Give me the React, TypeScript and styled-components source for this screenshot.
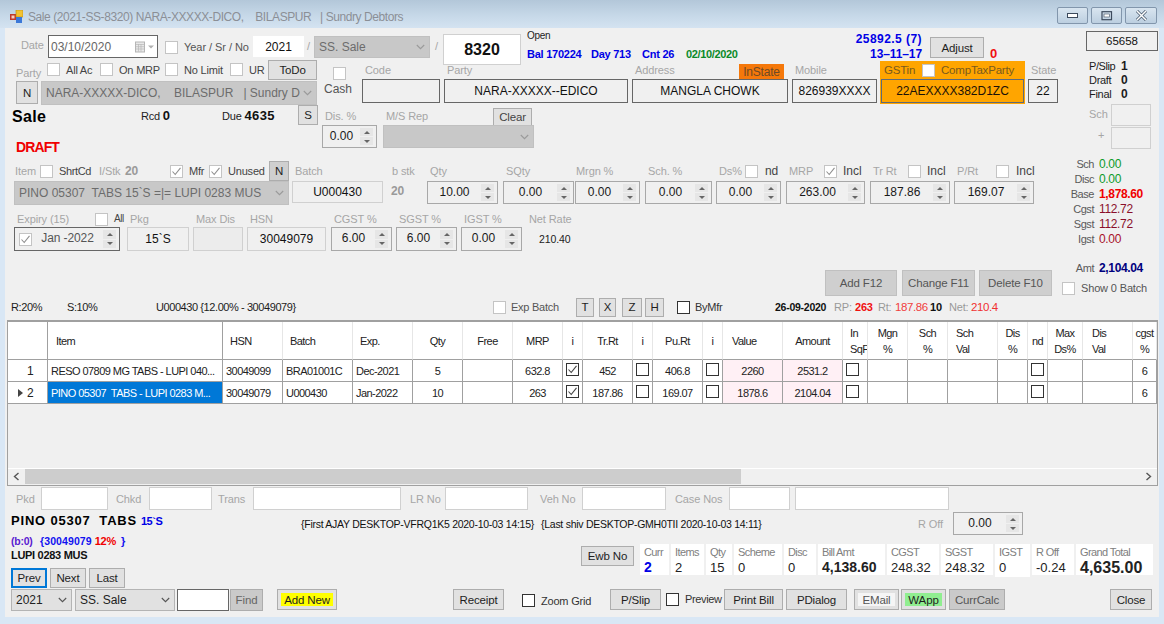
import React from 'react';
import styled, { createGlobalStyle, css } from 'styled-components';

const Global = createGlobalStyle`
  html, body { margin: 0; padding: 0; background: #d9e7f5; }
  body { font-family: "Liberation Sans", Arial, sans-serif; font-size: 11px; color: #222; }
  * { box-sizing: border-box; }
`;

type P = { $w?: number; $h?: number; $ml?: number; $mt?: number };
const place = css<P>`
  flex: none;
  ${(p) => p.$w !== undefined && `width:${p.$w}px;`}
  ${(p) => p.$h !== undefined && `height:${p.$h}px;`}
  ${(p) => p.$ml !== undefined && `margin-left:${p.$ml}px;`}
  ${(p) => p.$mt !== undefined && `margin-top:${p.$mt}px;`}
`;

const Window = styled.div`
  width: 1164px; height: 624px; overflow: hidden; display: flex; flex-direction: column;
  background: #d9e7f5;
`;
const TitleBar = styled.div`
  height: 28px; flex: none; display: flex; align-items: center; padding: 5px 7px 0 10px;
  background: linear-gradient(180deg, #b3c7d9 0%, #c6d8e8 55%, #d4e3f1 100%);
`;
const TitleText = styled.span`
  margin-left: 5px; font-size: 12px; color: #8b8f96; white-space: pre; letter-spacing: -0.42px; flex: 1;
`;
const WinBtn = styled.div<{ $ml?: number; $w: number }>`
  width: ${(p) => p.$w}px; height: 17px; margin-left: ${(p) => p.$ml ?? 3}px; margin-top: 2px; align-self: flex-start;
  border: 1px solid #8296ac; border-radius: 2px;
  background: linear-gradient(180deg, #d9e5f0 0%, #bccfe0 100%);
  display: flex; align-items: center; justify-content: center;
`;
const Body = styled.div`
  width: 1154px; height: 589px; margin-left: 5px; background: #f0f0f0; flex: none;
  display: flex; flex-direction: column;
`;
const Upper = styled.div`
  height: 290px; flex: none; display: flex;
`;
const MainCol = styled.div`
  width: 1055px; flex: none; display: flex; flex-direction: column;
`;
const SideCol = styled.div`
  width: 99px; flex: none; display: flex; flex-direction: column;
`;
const Row = styled.div<P & { $center?: boolean }>`
  ${place}
  display: flex;
  align-items: ${(p) => (p.$center ? 'center' : 'flex-start')};
`;
const Stack = styled.div<P>`
  ${place}
  display: flex; flex-direction: column;
`;
const Lbl = styled.span<P>`
  ${place}
  font-size: 11px; color: #a6a6a6; white-space: pre; letter-spacing: -0.1px; line-height: 14px;
`;
const Txt = styled.span<P & { $size?: number; $bold?: boolean; $color?: string; $ls?: number; $right?: boolean }>`
  ${place}
  font-size: ${(p) => p.$size ?? 11}px;
  font-weight: ${(p) => (p.$bold ? 700 : 400)};
  color: ${(p) => p.$color ?? '#1c1c1c'};
  letter-spacing: ${(p) => p.$ls ?? -0.2}px;
  text-align: ${(p) => (p.$right ? 'right' : 'left')};
  white-space: pre; line-height: 14px;
`;
const CheckBox = styled.span<P & { $dark?: boolean; $fill?: string }>`
  ${place}
  width: 13px; height: 13px; display: inline-flex; align-items: center; justify-content: center;
  background: ${(p) => p.$fill ?? '#fff'};
  border: 1px solid ${(p) => (p.$dark ? '#333' : '#c4c4c4')};
`;
const Tick = () => (
  <svg width="11" height="11" viewBox="0 0 11 11"><path d="M1.5 5.5 4.2 8.5 9.5 1.8" fill="none" stroke="#8f8f8f" strokeWidth="1.1" /></svg>
);
const Check: React.FC<P & { on?: boolean; dark?: boolean; fill?: string }> = ({ on, dark, fill, ...r }) => (
  <CheckBox {...r} $dark={dark} $fill={fill}>{on && <Tick />}</CheckBox>
);
const Btn = styled.div<P & { $bg?: string; $color?: string; $focus?: boolean; $border?: string }>`
  ${place}
  display: flex; align-items: center; justify-content: center;
  background: ${(p) => p.$bg ?? '#e1e1e1'};
  border: ${(p) => (p.$focus ? '2px solid #0078d7' : `1px solid ${p.$border ?? '#adadad'}`)};
  font-size: 11.5px; color: ${(p) => p.$color ?? '#1e1e1e'}; white-space: pre; letter-spacing: -0.15px;
`;
const Inner = styled.span<{ $bg: string }>`
  display: flex; align-items: center; justify-content: center; width: 100%; height: 100%;
  background: ${(p) => p.$bg};
`;
const BtnFrame = styled(Btn)`padding: 3px;`;
const Box = styled.div<P & { $dark?: boolean; $white?: boolean; $size?: number; $bold?: boolean; $bg?: string; $noBorder?: boolean }>`
  ${place}
  display: flex; align-items: center; justify-content: center;
  background: ${(p) => p.$bg ?? (p.$white ? '#fff' : '#f0f0f0')};
  border: 1px solid ${(p) => (p.$dark ? '#666' : '#d0d0d0')};
  ${(p) => p.$noBorder && 'border-color: #fff;'}
  font-size: ${(p) => p.$size ?? 12}px; font-weight: ${(p) => (p.$bold ? 700 : 400)};
  color: #111; white-space: pre; overflow: hidden;
`;
const ComboBox = styled.div<P & { $light?: boolean }>`
  ${place}
  display: flex; align-items: center; padding: 0 4px 0 4px;
  background: ${(p) => (p.$light ? '#e1e1e1' : '#c8c8c8')};
  border: 1px solid ${(p) => (p.$light ? '#b4b4b4' : '#c0c0c0')};
  font-size: 12px; color: ${(p) => (p.$light ? '#222' : '#6c6c6c')}; white-space: pre; overflow: hidden;
`;
const ComboText = styled.span`flex: 1; overflow: hidden; white-space: pre;`;
const Chevron: React.FC<{ dark?: boolean }> = ({ dark }) => (
  <svg width="9" height="6" viewBox="0 0 9 6"><path d="M.8 1 4.5 4.7 8.2 1" fill="none" stroke={dark ? '#555' : '#9a9a9a'} strokeWidth="1.1" /></svg>
);
const Combo: React.FC<P & { light?: boolean; children?: React.ReactNode }> = ({ light, children, ...r }) => (
  <ComboBox {...r} $light={light}><ComboText>{children}</ComboText><Chevron dark={light} /></ComboBox>
);
const SpinBox = styled.div<P & { $dark?: boolean }>`
  ${place}
  display: flex; align-items: center; padding: 2px 3px 2px 0;
  border: 1px solid ${(p) => (p.$dark ? '#666' : '#a8a8a8')};
  font-size: 12px; color: #1a1a1a; background: #f0f0f0;
`;
const SpinVal = styled.span`flex: 1; text-align: center; padding-bottom: 2px; white-space: pre;`;
const SpinCol = styled.div`
  width: 13px; height: 100%; display: flex; flex-direction: column; gap: 1px; flex: none;
`;
const SpinPart = styled.div<{ $down?: boolean }>`
  flex: 1; background: #e6e6e6; display: flex; align-items: center; justify-content: center;
  &::after {
    content: ''; border-left: 3px solid transparent; border-right: 3px solid transparent;
    ${(p) => (p.$down ? 'border-top: 3px solid #666;' : 'border-bottom: 3px solid #666;')}
  }
`;
const Spin: React.FC<P & { v: string; dark?: boolean }> = ({ v, dark, ...r }) => (
  <SpinBox {...r} $dark={dark}><SpinVal>{v}</SpinVal><SpinCol><SpinPart /><SpinPart $down /></SpinCol></SpinBox>
);
const Field = styled.div<P>`
  ${place}
  display: flex; flex-direction: column; position: relative;
`;
const Head = styled.div<{ $h: number; $pl?: number }>`
  height: ${(p) => p.$h}px; flex: none; display: flex; align-items: center;
  padding-left: ${(p) => p.$pl ?? 3}px;
`;
const InState = styled.span`
  position: absolute; right: 4px; top: 3px; width: 45px; height: 15px;
  background: #f5780a; color: #6f4a25; font-size: 12px; letter-spacing: -0.2px;
  display: flex; align-items: center; justify-content: center;
`;
const GstPanel = styled.div<P>`
  ${place}
  background: #ffa500; display: flex; flex-direction: column; padding: 0 1px;
`;
const GstHead = styled.div`
  height: 18px; display: flex; align-items: center; padding-left: 3px; color: #7a5a1e; font-size: 11.5px; letter-spacing: -0.2px;
`;
const GstInput = styled.div`
  height: 24px; background: #ffa500; border: 1px solid #5f6a78; display: flex; align-items: center; justify-content: center;
  font-size: 12px; color: #1a1208;
`;
const SumGrid = styled.div<{ $mt: number }>`
  display: grid; grid-template-columns: 34px auto; column-gap: 5px; margin-top: ${(p) => p.$mt}px; justify-content: start;
`;
const SumL = styled.span`
  font-size: 11px; color: #5a5a5a; letter-spacing: -0.45px; text-align: right; line-height: 15px; white-space: pre;
`;
const SumV = styled.span<{ $c: string; $bold?: boolean }>`
  font-size: 12px; color: ${(p) => p.$c}; font-weight: ${(p) => (p.$bold ? 700 : 400)};
  letter-spacing: -0.35px; line-height: 15px; white-space: pre;
`;

const GridWrap = styled.div`
  height: 166px; flex: none; margin: 2px 0 0 2px; width: 1151px; display: flex; flex-direction: column;
  border: 1px solid #a0a0a0; border-top-width: 2px; background: #f0f0f0; overflow: hidden;
`;
const GridArea = styled.div`
  height: 147px; flex: none; overflow: hidden; border-bottom: 1px solid #fff;
`;
const Tbl = styled.table`
  border-collapse: separate; border-spacing: 0; table-layout: fixed; width: 1149px;
  font-size: 11px; letter-spacing: -0.55px; color: #222;
`;
const Col = styled.col<{ $w: number }>`width: ${(p) => p.$w}px;`;
const Th = styled.th<{ $left?: boolean; $pl?: number }>`
  height: 38px; padding: 0 0 0 ${(p) => p.$pl ?? 0}px; font-weight: 400; background: #fff;
  text-align: ${(p) => (p.$left ? 'left' : 'center')}; line-height: 16px; font-size: 11px;
  border-right: 1px solid #e6e6e6; border-bottom: 1px solid #a0a0a0; white-space: pre;
  overflow: hidden;
  &:first-child { border-right-color: #a0a0a0; }
  &:nth-child(2) { border-right-color: #a0a0a0; }
`;
const Td = styled.td<{ $left?: boolean; $pink?: boolean; $sel?: boolean }>`
  height: 22px; padding: ${(p) => (p.$left ? '0 0 0 3px' : '0')}; 
  background: ${(p) => (p.$sel ? '#0078d7' : p.$pink ? '#fff0f5' : '#fff')};
  color: ${(p) => (p.$sel ? '#fff' : '#222')};
  text-align: ${(p) => (p.$left ? 'left' : 'center')};
  border-right: 1px solid #a0a0a0; border-bottom: 1px solid #a0a0a0; white-space: pre; overflow: hidden;
`;
const Hdr = styled(Td)`
  position: relative; font-size: 12px;
`;
const RowNum = styled.span`
  display: flex; align-items: center; justify-content: flex-end; gap: 4px; padding-right: 14px;
`;
const Marker = styled.span`
  border-left: 5px solid #444; border-top: 4px solid transparent; border-bottom: 4px solid transparent;
`;
const CellCheck = styled.span`
  display: inline-flex; width: 13px; height: 13px; border: 1px solid #333; background: #fff;
  align-items: center; justify-content: center; vertical-align: middle;
`;
const CheckCell = styled(Td)`padding: 0 0 2px 3px; text-align: left;`;
const ScrollBar = styled.div`
  height: 15px; flex: none; display: flex; align-items: center; background: #f0f0f0;
`;
const ScrollArrow = styled.span<{ $right?: boolean }>`
  width: 17px; height: 100%; display: flex; align-items: center; justify-content: center; flex: none;
  ${(p) => p.$right && 'margin-left: auto;'}
`;
const Thumb = styled.div`width: 716px; height: 15px; background: #cdcdcd;`;

const Tile = styled.div<P & { $tall?: boolean }>`
  ${place}
  background: #fff; height: ${(p) => (p.$tall ? 33 : 31)}px; display: flex; flex-direction: column; padding: 1px 0 0 4px;
`;
const TileL = styled.span`
  font-size: 11px; color: #808080; letter-spacing: -0.6px; line-height: 14px; white-space: pre;
`;
const TileV = styled.span<{ $size?: number; $bold?: boolean; $color?: string; $ls?: number }>`
  font-size: ${(p) => p.$size ?? 13}px; font-weight: ${(p) => (p.$bold ? 700 : 400)};
  color: ${(p) => p.$color ?? '#222'}; line-height: 15px; white-space: pre; margin-top: 1px;
  letter-spacing: ${(p) => p.$ls ?? 0}px;
`;

const cols = [40, 175, 60, 70, 60, 50, 50, 50, 20, 50, 20, 50, 20, 60, 60, 25, 40, 40, 50, 30, 20, 35, 50, 24];
const headers: { t: string; left?: boolean; pl?: number }[] = [
  { t: '' }, { t: 'Item', left: true, pl: 8 }, { t: 'HSN', left: true, pl: 7 }, { t: 'Batch', left: true, pl: 7 }, { t: 'Exp.', left: true, pl: 7 },
  { t: 'Qty' }, { t: 'Free' }, { t: 'MRP' }, { t: 'i' }, { t: 'Tr.Rt' }, { t: 'i' }, { t: 'Pu.Rt' }, { t: 'i' },
  { t: 'Value', left: true, pl: 9 }, { t: 'Amount' }, { t: 'In\nSqF', left: true, pl: 7 }, { t: 'Mgn\n%' }, { t: 'Sch\n%' }, { t: 'Sch\nVal', left: true, pl: 8 },
  { t: 'Dis\n%' }, { t: 'nd' }, { t: 'Max\nDs%' }, { t: 'Dis\nVal', left: true, pl: 9 }, { t: 'cgst\n%' },
];
const TableTick = () => (
  <svg width="11" height="11" viewBox="0 0 11 11"><path d="M1.5 5.5 4.2 8.5 9.5 1.8" fill="none" stroke="#444" strokeWidth="1.1" /></svg>
);
const rows = [
  { n: '1', item: 'RESO 07809 MG TABS - LUPI 040...', hsn: '30049099', batch: 'BRA01001C', exp: 'Dec-2021', qty: '5', mrp: '632.8', tr: '452', pu: '406.8', val: '2260', amt: '2531.2' },
  { n: '2', item: 'PINO 05307  TABS - LUPI 0283 M...', hsn: '30049079', batch: 'U000430', exp: 'Jan-2022', qty: '10', mrp: '263', tr: '187.86', pu: '169.07', val: '1878.6', amt: '2104.04', sel: true },
];

const IconApp = () => (
  <svg width="13" height="13" viewBox="0 0 13 13">
    <rect x="0" y="4" width="6" height="6" fill="#c0392b" />
    <rect x="6" y="0" width="7" height="7" fill="#f2c230" stroke="#b8860b" strokeWidth=".6" />
    <rect x="6" y="7" width="6" height="6" fill="#3b78d8" />
    <rect x="1.5" y="5.5" width="3" height="3" fill="#f5d0c0" />
  </svg>
);
const Calendar = () => (
  <svg width="20" height="12" viewBox="0 0 20 12">
    <rect x=".5" y="1" width="9" height="10" fill="#e8e8e8" stroke="#b5b5b5" />
    <path d="M1 3.5h8M1 5.7h8M1 8h8M3.5 3v7.5M6 3v7.5" stroke="#b8b8b8" strokeWidth=".7" />
    <path d="M13 4.5h6l-3 3z" fill="#b0b0b0" />
  </svg>
);

export default function App() {
  return (
    <Window>
      <Global />
      <TitleBar>
        <IconApp />
        <TitleText>{'Sale (2021-SS-8320) NARA-XXXXX-DICO,    BILASPUR   | Sundry Debtors'}</TitleText>
        <WinBtn $w={31}>
          <svg width="12" height="6" viewBox="0 0 12 6"><rect x=".5" y=".5" width="10" height="4" fill="#fff" stroke="#3c4a5c" /></svg>
        </WinBtn>
        <WinBtn $w={31}>
          <svg width="12" height="10" viewBox="0 0 12 10"><rect x="1" y=".7" width="9.5" height="8" fill="none" stroke="#3c4a5c" strokeWidth="1.2" /><rect x="3" y="3" width="5.5" height="3" fill="#fff" stroke="#3c4a5c" strokeWidth=".6" /></svg>
        </WinBtn>
        <WinBtn $w={32}>
          <svg width="13" height="11" viewBox="0 0 13 11"><path d="M2 1 11 10M11 1 2 10" stroke="#45566a" strokeWidth="3" /><path d="M2 1 11 10M11 1 2 10" stroke="#fff" strokeWidth="1.5" /></svg>
        </WinBtn>
      </TitleBar>
      <Body>
        <Upper>
          <MainCol>
            <Row $h={32}>
              <Lbl $ml={16} $w={27} $mt={10}>Date</Lbl>
              <Box $w={110} $h={23} $mt={7} $dark $white $size={12}>
                <Txt $w={84} $size={12} $color="#666" $ls={0}>03/10/2020</Txt>
                <Calendar />
              </Box>
              <Check $ml={7} $mt={13} />
              <Txt $ml={6} $w={69} $mt={12} $color="#555" $ls={-0.05}>Year / Sr / No</Txt>
              <Box $w={51} $h={21} $mt={8} $white $noBorder>2021</Box>
              <Lbl $w={10} $ml={0} $mt={11}>{' /'}</Lbl>
              <Combo $w={116} $h={22} $mt={8}>SS. Sale</Combo>
              <Lbl $w={8} $ml={5} $mt={11}>/</Lbl>
              <Box $w={78} $h={31} $mt={6} $white $size={16} $bold>8320</Box>
              <Stack $w={322} $ml={6} $mt={1}>
                <Txt $size={10} $ls={-0.3}>Open</Txt>
                <Row $mt={4}>
                  <Txt $w={64} $bold $color="#0000e6" $ls={-0.25}>Bal 170224</Txt>
                  <Txt $w={51} $bold $color="#0000e6" $ls={-0.25}>Day 713</Txt>
                  <Txt $w={44} $bold $color="#0000e6" $ls={-0.25}>Cnt 26</Txt>
                  <Txt $bold $color="#0a8a28" $ls={-0.35}>02/10/2020</Txt>
                </Row>
              </Stack>
              <Stack $w={73} $mt={4}>
                <Txt $right $bold $size={12} $color="#0000e6" $ls={0.45}>25892.5 (7)</Txt>
                <Txt $right $bold $size={12} $color="#0000e6" $ls={-0.1} $mt={1}>13–11–17</Txt>
              </Stack>
              <Btn $ml={8} $w={54} $h={21} $mt={9}>Adjust</Btn>
              <Txt $ml={6} $mt={19} $size={13} $bold $color="#f01010">0</Txt>
            </Row>
            <Row $h={100}>
              <Stack $w={315}>
                <Row $h={21}>
                  <Lbl $ml={11} $w={31} $mt={6}>Party</Lbl>
                  <Check $mt={3} />
                  <Txt $ml={6} $w={34} $mt={3} $color="#444">All Ac</Txt>
                  <Check $mt={3} />
                  <Txt $ml={6} $w={46} $mt={3} $color="#444">On MRP</Txt>
                  <Check $mt={3} />
                  <Txt $ml={6} $w={46} $mt={3} $color="#444">No Limit</Txt>
                  <Check $mt={3} />
                  <Txt $ml={6} $w={19} $mt={3} $color="#444">UR</Txt>
                  <Btn $w={49} $h={20}>ToDo</Btn>
                </Row>
                <Row $h={24}>
                  <Btn $ml={11} $w={22} $h={23}>N</Btn>
                  <Combo $ml={3} $w={276} $h={24}>{'NARA-XXXXX-DICO,    BILASPUR   | Sundry D'}</Combo>
                </Row>
                <Row $h={20}>
                  <Txt $ml={7} $w={129} $mt={5} $size={16} $bold $color="#000" $ls={0.3}>Sale</Txt>
                  <Txt $w={81} $mt={4} $size={11}>Rcd <Txt $bold $size={13} $color="#111">0</Txt></Txt>
                  <Txt $w={76} $mt={4} $size={11}>Due <Txt $bold $size={13} $color="#111" $ls={0.4}>4635</Txt></Txt>
                  <Btn $w={20} $h={20}>S</Btn>
                </Row>
                <Txt $ml={11} $mt={15} $size={14} $bold $color="#f00000" $ls={-0.9}>DRAFT</Txt>
              </Stack>
              <Stack>
                <Row $h={45} $mt={1}>
                  <Stack $ml={4} $w={38}>
                    <Check $ml={9} $mt={6} />
                    <Txt $mt={2} $size={12} $ls={0} $color="#555">Cash</Txt>
                  </Stack>
                  <Field $w={78}><Head $h={18}><Lbl>Code</Lbl></Head><Box $h={24} $dark /></Field>
                  <Field $w={184} $ml={4}><Head $h={18}><Lbl>Party</Lbl></Head><Box $h={24} $dark>NARA-XXXXX--EDICO</Box></Field>
                  <Field $w={156} $ml={4}>
                    <Head $h={18}><Lbl>Address</Lbl></Head>
                    <InState>InState</InState>
                    <Box $h={24} $dark>MANGLA CHOWK</Box>
                  </Field>
                  <Field $w={85} $ml={4}><Head $h={18}><Lbl>Mobile</Lbl></Head><Box $h={24} $dark>826939XXXX</Box></Field>
                  <GstPanel $w={145} $h={43} $ml={3}>
                    <GstHead>
                      <Txt $w={38} $size={11.5} $color="#7a5a1e">GSTin</Txt>
                      <Check />
                      <Txt $ml={6} $size={11.5} $color="#7a5a1e">CompTaxParty</Txt>
                    </GstHead>
                    <GstInput>22AEXXXX382D1ZC</GstInput>
                  </GstPanel>
                  <Field $w={30} $ml={3}><Head $h={18}><Lbl>State</Lbl></Head><Box $h={24} $dark>22</Box></Field>
                </Row>
                <Row>
                  <Field $w={55} $ml={2}>
                    <Head $h={19}><Lbl>Dis. %</Lbl></Head>
                    <Spin $h={23} v="0.00" />
                  </Field>
                  <Field $w={151} $ml={6}>
                    <Head $h={19}>
                      <Lbl>M/S Rep</Lbl>
                      <Btn $ml={65} $w={39} $h={18} $mt={2} $color="#444">Clear</Btn>
                    </Head>
                    <Combo $h={23} />
                  </Field>
                </Row>
              </Stack>
            </Row>
            <Row $mt={1} $h={44}>
              <Field $w={275} $ml={9}>
                <Head $h={20} $pl={1}>
                  <Lbl $w={25}>Item</Lbl>
                  <Check />
                  <Txt $ml={6} $w={40} $ls={-0.35} $color="#444">ShrtCd</Txt>
                  <Lbl $w={26}>I/Stk</Lbl>
                  <Txt $w={45} $size={12} $bold $color="#9a9a9a">20</Txt>
                  <Check on />
                  <Txt $ml={6} $w={20} $color="#444">Mfr</Txt>
                  <Check on />
                  <Txt $ml={6} $w={41} $color="#444">Unused</Txt>
                  <Btn $w={20} $h={20} $bg="#cfcfcf">N</Btn>
                </Head>
                <Combo $h={24}>{'PINO 05307  TABS 15`S =|= LUPI 0283 MUS'}</Combo>
              </Field>
              <Field $w={91} $ml={3}><Head $h={20}><Lbl>Batch</Lbl></Head><Box $h={22}>U000430</Box></Field>
              <Stack $w={38} $ml={6}>
                <Head $h={20}><Lbl>b stk</Lbl></Head>
                <Txt $ml={2} $mt={3} $size={12} $bold $color="#9a9a9a">20</Txt>
              </Stack>
              <Field $w={71}><Head $h={20}><Lbl>Qty</Lbl></Head><Spin $h={23} v="10.00" /></Field>
              <Field $w={71} $ml={5}><Head $h={20}><Lbl>SQty</Lbl></Head><Spin $h={23} v="0.00" /></Field>
              <Field $w={65} $ml={1}><Head $h={20} $pl={1}><Lbl>Mrgn %</Lbl></Head><Spin $h={23} v="0.00" /></Field>
              <Field $w={67} $ml={5}><Head $h={20}><Lbl>Sch. %</Lbl></Head><Spin $h={23} v="0.00" /></Field>
              <Field $w={65} $ml={4}>
                <Head $h={20}><Lbl $w={26}>Ds%</Lbl><Check /><Txt $ml={7} $size={12} $color="#444">nd</Txt></Head>
                <Spin $h={23} v="0.00" />
              </Field>
              <Field $w={79} $ml={5}>
                <Head $h={20}><Lbl $w={35}>MRP</Lbl><Check on /><Txt $ml={6} $size={12} $color="#444" $ls={0}>Incl</Txt></Head>
                <Spin $h={23} v="263.00" />
              </Field>
              <Field $w={80} $ml={5}>
                <Head $h={20}><Lbl $w={35}>Tr Rt</Lbl><Check /><Txt $ml={6} $size={12} $color="#444" $ls={0}>Incl</Txt></Head>
                <Spin $h={23} v="187.86" />
              </Field>
              <Field $w={80} $ml={4}>
                <Head $h={20}><Lbl $w={39}>P/Rt</Lbl><Check /><Txt $ml={7} $size={12} $color="#444" $ls={0}>Incl</Txt></Head>
                <Spin $h={23} v="169.07" />
              </Field>
            </Row>
            <Row $mt={6} $h={40}>
              <Field $w={106} $ml={9}>
                <Head $h={16}>
                  <Lbl $w={78}>Expiry (15)</Lbl>
                  <Check />
                  <Txt $ml={6} $size={10} $ls={-0.5} $color="#444">All</Txt>
                </Head>
                <SpinBox $h={24} $dark>
                  <Check on $ml={4} />
                  <SpinVal><Txt $size={12} $ls={-0.1} $color="#555">Jan -2022</Txt></SpinVal>
                  <SpinCol><SpinPart /><SpinPart $down /></SpinCol>
                </SpinBox>
              </Field>
              <Field $w={62} $ml={7}><Head $h={16}><Lbl>Pkg</Lbl></Head><Box $h={24}>15`S</Box></Field>
              <Field $w={50} $ml={4}><Head $h={16}><Lbl>Max Dis</Lbl></Head><Box $h={24} $bg="#ececec" /></Field>
              <Field $w={79} $ml={4}><Head $h={16}><Lbl>HSN</Lbl></Head><Box $h={24}>30049079</Box></Field>
              <Field $w={61} $ml={5}><Head $h={16}><Lbl>CGST %</Lbl></Head><Spin $h={24} v="6.00" /></Field>
              <Field $w={61} $ml={4}><Head $h={16}><Lbl>SGST %</Lbl></Head><Spin $h={24} v="6.00" /></Field>
              <Field $w={61} $ml={4}><Head $h={16}><Lbl>IGST %</Lbl></Head><Spin $h={24} v="0.00" /></Field>
              <Field $w={70} $ml={4}>
                <Head $h={16}><Lbl>Net Rate</Lbl></Head>
                <Txt $ml={13} $mt={5} $size={10.5} $ls={-0.1}>210.40</Txt>
              </Field>
            </Row>
            <Row $mt={19} $h={26}>
              <Btn $ml={820} $w={72} $h={26} $bg="#cfcfcf" $color="#555" $border="#c0c0c0">Add F12</Btn>
              <Btn $ml={5} $w={73} $h={26} $bg="#cfcfcf" $color="#555" $border="#c0c0c0">Change F11</Btn>
              <Btn $ml={4} $w={73} $h={26} $bg="#cfcfcf" $color="#555" $border="#c0c0c0">Delete F10</Btn>
            </Row>
            <Row $mt={1} $h={20} $center>
              <Txt $ml={6} $w={56} $ls={-0.4}>R:20%</Txt>
              <Txt $w={89} $ls={-0.4}>S:10%</Txt>
              <Txt $w={337} $ls={-0.42}>{'U000430 {12.00% - 30049079}'}</Txt>
              <Check />
              <Txt $ml={5} $w={65} $color="#555" $ls={-0.25}>Exp Batch</Txt>
              <Btn $w={18} $h={19}>T</Btn>
              <Btn $ml={5} $w={17} $h={19}>X</Btn>
              <Btn $ml={6} $w={20} $h={19}>Z</Btn>
              <Btn $ml={3} $w={19} $h={19}>H</Btn>
              <Check $ml={13} dark />
              <Txt $ml={5} $w={80} $color="#333" $ls={-0.25}>ByMfr</Txt>
              <Txt $w={59} $bold $size={10.5} $color="#111" $ls={-0.25}>26-09-2020</Txt>
              <Txt $w={21} $color="#999">RP:</Txt>
              <Txt $w={23} $bold $color="#f01010">263</Txt>
              <Txt $w={17} $color="#999">Rt:</Txt>
              <Txt $w={35} $color="#f04040" $size={11.5} $ls={-0.4}>187.86</Txt>
              <Txt $w={19} $bold $color="#111">10</Txt>
              <Txt $w={22} $color="#999">Net:</Txt>
              <Txt $color="#f03030" $size={11.5} $ls={-0.4}>210.4</Txt>
            </Row>
          </MainCol>
          <SideCol>
            <Box $ml={26} $mt={3} $w={72} $h={20} $dark $size={11.5}>65658</Box>
            <Row $ml={29} $mt={8} $h={14}><Txt $w={32} $ls={-0.4}>P/Slip</Txt><Txt $bold $size={12}>1</Txt></Row>
            <Row $ml={29} $h={14}><Txt $w={32} $ls={-0.3}>Draft</Txt><Txt $bold $size={12}>0</Txt></Row>
            <Row $ml={29} $h={14}><Txt $w={32} $ls={-0.3}>Final</Txt><Txt $bold $size={12}>0</Txt></Row>
            <Row $ml={29} $mt={3} $h={22}>
              <Lbl $w={22} $mt={3}>Sch</Lbl>
              <Box $w={40} $h={22} $bg="#f0f0f0" />
            </Row>
            <Row $ml={29} $mt={1} $h={22}>
              <Lbl $w={22} $ml={9} $mt={1}>+</Lbl>
              <Box $w={40} $h={22} $ml={-9} $bg="#f0f0f0" />
            </Row>
            <SumGrid $mt={8}>
              <SumL>Sch</SumL><SumV $c="#0d9b2a">0.00</SumV>
              <SumL>Disc</SumL><SumV $c="#0d9b2a">0.00</SumV>
              <SumL>Base</SumL><SumV $c="#f00000" $bold>1,878.60</SumV>
              <SumL>Cgst</SumL><SumV $c="#8a0f2a">112.72</SumV>
              <SumL>Sgst</SumL><SumV $c="#8a0f2a">112.72</SumV>
              <SumL>Igst</SumL><SumV $c="#a8102a">0.00</SumV>
            </SumGrid>
            <SumGrid $mt={14}>
              <SumL>Amt</SumL><SumV $c="#00007f" $bold>2,104.04</SumV>
            </SumGrid>
            <Row $ml={2} $mt={5} $center>
              <Check />
              <Txt $ml={6} $color="#555" $ls={-0.15}>Show 0 Batch</Txt>
            </Row>
          </SideCol>
        </Upper>
        <GridWrap>
          <GridArea>
            <Tbl>
              <colgroup>{cols.map((w, i) => <Col key={i} $w={w} />)}</colgroup>
              <thead>
                <tr>{headers.map((h, i) => <Th key={i} $left={h.left} $pl={h.pl}>{h.t}</Th>)}</tr>
              </thead>
              <tbody>
                {rows.map((r) => (
                  <tr key={r.n}>
                    <Hdr><RowNum>{r.sel && <Marker />}{r.n}</RowNum></Hdr>
                    <Td $left $sel={r.sel}>{r.item}</Td>
                    <Td $left>{r.hsn}</Td>
                    <Td $left>{r.batch}</Td>
                    <Td $left>{r.exp}</Td>
                    <Td>{r.qty}</Td>
                    <Td />
                    <Td>{r.mrp}</Td>
                    <CheckCell><CellCheck><TableTick /></CellCheck></CheckCell>
                    <Td>{r.tr}</Td>
                    <CheckCell><CellCheck /></CheckCell>
                    <Td>{r.pu}</Td>
                    <CheckCell><CellCheck /></CheckCell>
                    <Td $pink>{r.val}</Td>
                    <Td $pink>{r.amt}</Td>
                    <CheckCell><CellCheck /></CheckCell>
                    <Td /><Td /><Td /><Td />
                    <CheckCell><CellCheck /></CheckCell>
                    <Td /><Td />
                    <Td>6</Td>
                  </tr>
                ))}
              </tbody>
            </Tbl>
          </GridArea>
          <ScrollBar>
            <ScrollArrow><svg width="7" height="9" viewBox="0 0 7 9"><path d="M5.5 1 1.5 4.5 5.5 8" fill="none" stroke="#555" strokeWidth="1.4" /></svg></ScrollArrow>
            <Thumb />
            <ScrollArrow $right><svg width="7" height="9" viewBox="0 0 7 9"><path d="M1.5 1 5.5 4.5 1.5 8" fill="none" stroke="#555" strokeWidth="1.4" /></svg></ScrollArrow>
          </ScrollBar>
        </GridWrap>
        <Row $mt={1} $h={23} $center>
          <Lbl $ml={11} $w={25}>Pkd</Lbl><Box $w={67} $h={23} $white />
          <Lbl $ml={8} $w={33}>Chkd</Lbl><Box $w={63} $h={23} $white />
          <Lbl $ml={6} $w={35}>Trans</Lbl><Box $w={148} $h={23} $white />
          <Lbl $ml={9} $w={35}>LR No</Lbl><Box $w={83} $h={23} $white />
          <Lbl $ml={12} $w={42}>Veh No</Lbl><Box $w={84} $h={23} $white />
          <Lbl $ml={9} $w={54}>Case Nos</Lbl><Box $w={61} $h={23} $white />
          <Box $ml={5} $w={154} $h={23} $white />
        </Row>
        <Row $h={78}>
          <Stack $w={291}>
            <Row $ml={6} $mt={2} $h={18} $center>
              <Txt $w={130} $size={13} $bold $color="#000" $ls={0.8}>{'PINO 05307  TABS'}</Txt>
              <Txt $size={11} $bold $color="#0000e6" $ls={-0.5}>15`S</Txt>
            </Row>
            <Row $ml={6} $mt={3} $h={15} $center>
              <Txt $w={29} $bold $color="#5a20d0" $ls={-0.25} $size={10.5}>(b:0)</Txt>
              <Txt $w={52} $bold $color="#1010f0" $ls={0.1} $size={10.5}>{'{30049079'}</Txt>
              <Txt $w={29} $bold $color="#f00000" $ls={-0.3}>{' 12%'}</Txt>
              <Txt $bold $color="#1010f0">{'}'}</Txt>
            </Row>
            <Txt $ml={6} $h={14} $bold $color="#111" $ls={-0.3}>LUPI 0283 MUS</Txt>
            <Row $ml={6} $mt={6}>
              <Btn $w={36} $h={20} $focus>Prev</Btn>
              <Btn $ml={3} $w={36} $h={20}>Next</Btn>
              <Btn $ml={3} $w={36} $h={20}>Last</Btn>
            </Row>
          </Stack>
          <Stack>
            <Row $mt={2} $h={23} $center>
              <Txt $ml={5} $w={240} $size={10.5} $ls={-0.27} $color="#111">{'{First AJAY DESKTOP-VFRQ1K5 2020-10-03 14:15}'}</Txt>
              <Txt $w={377} $size={10.5} $ls={-0.27} $color="#111">{'{Last shiv DESKTOP-GMH0TII 2020-10-03 14:11}'}</Txt>
              <Lbl $w={35}>R Off</Lbl>
              <Spin $w={70} $h={23} v="0.00" />
            </Row>
            <Row $mt={9}>
              <Btn $ml={285} $mt={2} $w={53} $h={20}>Ewb No</Btn>
              <Tile $ml={6} $w={29}><TileL>Curr</TileL><TileV $size={14} $bold $color="#0000e6">2</TileV></Tile>
              <Tile $ml={2} $w={33}><TileL>Items</TileL><TileV>2</TileV></Tile>
              <Tile $ml={2} $w={26}><TileL>Qty</TileL><TileV>15</TileV></Tile>
              <Tile $ml={2} $w={48}><TileL>Scheme</TileL><TileV>0</TileV></Tile>
              <Tile $ml={2} $w={32}><TileL>Disc</TileL><TileV>0</TileV></Tile>
              <Tile $ml={2} $w={67}><TileL>Bill Amt</TileL><TileV $size={14} $bold>4,138.60</TileV></Tile>
              <Tile $ml={2} $w={52}><TileL>CGST</TileL><TileV>248.32</TileV></Tile>
              <Tile $ml={2} $w={52}><TileL>SGST</TileL><TileV>248.32</TileV></Tile>
              <Tile $ml={2} $w={35} $tall><TileL>IGST</TileL><TileV>0</TileV></Tile>
              <Tile $ml={2} $w={42}><TileL>R Off</TileL><TileV>-0.24</TileV></Tile>
              <Tile $ml={2} $w={77}><TileL>Grand Total</TileL><TileV $size={16} $bold>4,635.00</TileV></Tile>
            </Row>
          </Stack>
        </Row>
        <Row $mt={1} $h={22}>
          <Combo $ml={6} $w={61} $h={22} light>2021</Combo>
          <Combo $ml={3} $w={100} $h={22} light>SS. Sale</Combo>
          <Box $ml={2} $w={52} $h={22} $white $dark />
          <Btn $ml={1} $w={33} $h={22} $bg="#cacaca" $color="#666">Find</Btn>
          <BtnFrame $ml={14} $w={60} $h={21}><Inner $bg="#ffff00">Add New</Inner></BtnFrame>
          <Btn $ml={116} $w={51} $h={21}>Receipt</Btn>
          <Check $ml={18} $mt={5} dark />
          <Txt $ml={6} $w={63} $mt={5} $color="#333">Zoom Grid</Txt>
          <Btn $ml={6} $w={51} $h={21}>P/Slip</Btn>
          <Check $ml={5} $mt={4} dark />
          <Txt $ml={6} $w={39} $mt={3} $color="#333" $ls={-0.35}>Preview</Txt>
          <Btn $w={59} $h={21}>Print Bill</Btn>
          <Btn $ml={3} $w={61} $h={21}>PDialog</Btn>
          <BtnFrame $ml={7} $w={45} $h={21} $color="#555"><Inner $bg="#f5f5f5">EMail</Inner></BtnFrame>
          <BtnFrame $ml={2} $w={45} $h={21}><Inner $bg="#90ee90">WApp</Inner></BtnFrame>
          <Btn $ml={3} $w={56} $h={21} $bg="#cacaca" $color="#555">CurrCalc</Btn>
          <Btn $ml={105} $w={42} $h={21}>Close</Btn>
        </Row>
      </Body>
    </Window>
  );
}
